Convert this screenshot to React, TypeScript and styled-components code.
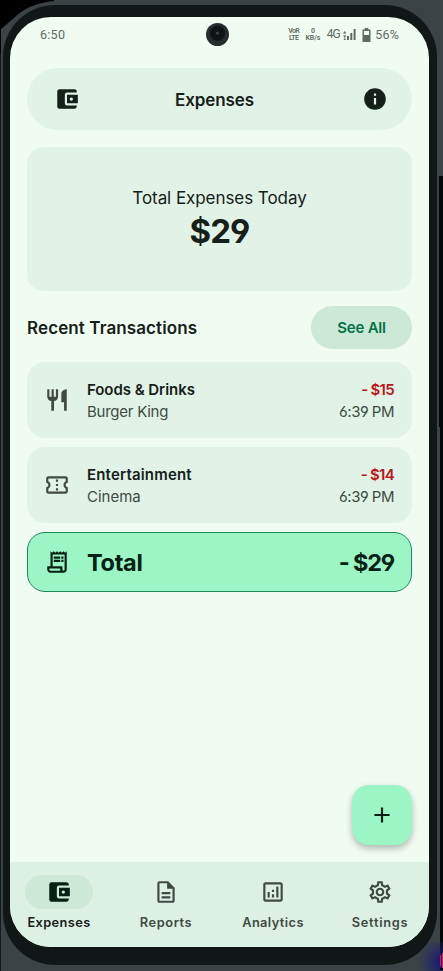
import React from "react";
import styled, { createGlobalStyle } from "styled-components";
import {
  MdAccountBalanceWallet,
  MdInfo,
  MdRestaurant,
  MdOutlineConfirmationNumber,
  MdOutlineReceiptLong,
  MdOutlineDescription,
  MdOutlineAnalytics,
  MdOutlineSettings,
  MdAdd,
} from "react-icons/md";

const Global = createGlobalStyle`
  * { box-sizing: border-box; }
  body { margin: 0; background: #000; overflow: hidden; font-family: Inter, sans-serif; font-feature-settings: "cv03", "cv04"; }
  button { font: inherit; border: 0; padding: 0; cursor: pointer; }
`;

const Stage = styled.div`
  position: relative;
  width: 443px;
  height: 971px;
  overflow: hidden;
  background: #3b4346;
`;

const Backdrop = styled.svg`
  position: absolute;
  inset: 0;
`;

const Phone = styled.main`
  position: relative;
  width: 434px;
  height: 960px;
  margin: 5px 0 0 3px;
  padding: 12px 8px 13px 7px;
  border-radius: 52px;
  background: #111616;
`;

const Screen = styled.div`
  position: relative;
  display: flex;
  flex-direction: column;
  width: 419px;
  height: 930px;
  overflow: hidden;
  border-radius: 41px;
  background: #f0fcf2;
  color: #16201a;
`;

const StatusBar = styled.div`
  display: flex;
  align-items: center;
  justify-content: space-between;
  height: 35px;
  padding: 0 30px;
  color: #606a63;
  font: 400 12.5px/15px Roboto, sans-serif;
`;

const Clock = styled.span`
  letter-spacing: 0.28px;
`;

const StatusItems = styled.div`
  display: flex;
  align-items: center;
`;

const TinyStack = styled.div<{ $gap: number; $spacing?: number }>`
  display: flex;
  flex-direction: column;
  align-items: center;
  margin-right: ${(p) => p.$gap}px;
  font-size: 7px;
  font-weight: 600;
  line-height: 6.9px;
  letter-spacing: ${(p) => p.$spacing ?? 0}px;
`;

const Network = styled.span`
  margin-right: 3px;
  font-size: 12px;
  letter-spacing: -1px;
`;

const Battery = styled.span`
  letter-spacing: 0.2px;
`;

const StatusSvg = styled.svg<{ $gap: number }>`
  margin-right: ${(p) => p.$gap}px;
`;

const Camera = styled.div`
  position: absolute;
  top: 6px;
  left: 196px;
  width: 23px;
  height: 23px;
  border-radius: 50%;
  background: radial-gradient(circle at 50% 44%, #3d4345 0 1px, #101415 2px 7px, #262c2f 8px);
`;

const Content = styled.div`
  display: flex;
  flex: 1;
  flex-direction: column;
  padding: 16px 17px 0;
`;

const Header = styled.header`
  display: grid;
  grid-template-columns: 26px 1fr 26px;
  align-items: center;
  height: 62px;
  padding: 0 24px 0 27px;
  border-radius: 31px;
  background: #e1f3e7;
`;

const Title = styled.h1`
  margin: 1px 10px 0 0;
  padding-right: 3px;
  font-size: 17px;
  font-weight: 600;
  line-height: 22px;
  letter-spacing: -0.12px;
  text-align: center;
`;

const Summary = styled.section`
  display: flex;
  flex-direction: column;
  align-items: center;
  height: 144px;
  margin-top: 17px;
  padding-top: 39px;
  border-radius: 17px;
  background: #e1f3e7;
`;

const SummaryLabel = styled.div`
  font-size: 17px;
  line-height: 24px;
  letter-spacing: -0.06px;
`;

const SummaryAmount = styled.div`
  font-size: 33px;
  font-weight: 700;
  line-height: 42px;
  letter-spacing: -0.9px;
`;

const SectionHead = styled.div`
  display: flex;
  align-items: center;
  justify-content: space-between;
  height: 43px;
  margin-top: 15px;
`;

const SectionTitle = styled.h2`
  margin: 0;
  font-size: 17px;
  font-weight: 600;
  letter-spacing: 0.11px;
`;

const SeeAll = styled.button`
  width: 101px;
  height: 43px;
  border-radius: 22px;
  background: #cce8d6;
  color: #087148;
  font-size: 15px;
  font-weight: 600;
  letter-spacing: -0.2px;
`;

const List = styled.div`
  display: flex;
  flex-direction: column;
  gap: 9px;
  margin-top: 12.6px;
`;

const Row = styled.article<{ $total?: boolean }>`
  display: grid;
  grid-template-columns: 43px 1fr auto;
  align-items: center;
  height: ${(p) => (p.$total ? 60 : 76.2)}px;
  padding: 0 ${(p) => (p.$total ? 17 : 18)}px 0 ${(p) => (p.$total ? 16 : 17)}px;
  border: ${(p) => (p.$total ? "1px solid #20875d" : "0")};
  border-radius: 18px;
  background: ${(p) => (p.$total ? "#9bf5c4" : "#e1f3e7")};
  color: ${(p) => (p.$total ? "#052113" : "#404a43")};
  svg { display: block; }
`;

const Cell = styled.div<{ $end?: boolean }>`
  display: flex;
  flex-direction: column;
  align-items: ${(p) => (p.$end ? "flex-end" : "flex-start")};
  padding-top: 2px;
  font-size: 15px;
  line-height: 22px;
`;

const Name = styled.div<{ $spacing: number }>`
  color: #16201a;
  font-weight: 600;
  letter-spacing: ${(p) => p.$spacing}px;
`;

const Amount = styled.div`
  color: #bd1518;
  font-weight: 600;
  letter-spacing: -0.7px;
`;

const Muted = styled.div<{ $spacing: number }>`
  letter-spacing: ${(p) => p.$spacing}px;
`;

const TotalText = styled.div<{ $spacing: number }>`
  padding-top: 2px;
  font-size: 23.5px;
  font-weight: 700;
  letter-spacing: ${(p) => p.$spacing}px;
`;

const Fab = styled.button`
  position: absolute;
  right: 17px;
  bottom: 102px;
  display: grid;
  place-items: center;
  width: 60px;
  height: 60px;
  border-radius: 17px;
  background: #9bf5c4;
  color: #052113;
  box-shadow: 0 4px 6px rgba(0, 0, 0, 0.2), 0 2px 8px rgba(0, 0, 0, 0.08);
`;

const Nav = styled.nav`
  display: grid;
  grid-template-columns: repeat(4, 98px);
  column-gap: 9px;
  height: 85px;
  padding-top: 13px;
  background: #ddf0e4;
`;

const NavItem = styled.a<{ $active?: boolean; $spacing: number }>`
  display: flex;
  flex-direction: column;
  align-items: center;
  color: ${(p) => (p.$active ? "#16201a" : "#404a43")};
  font-size: 12.8px;
  font-weight: 600;
  line-height: 17px;
  letter-spacing: ${(p) => p.$spacing}px;
`;

const NavPill = styled.span<{ $active?: boolean }>`
  display: grid;
  place-items: center;
  width: 68px;
  height: 34px;
  margin-bottom: 4.5px;
  border-radius: 17px;
  background: ${(p) => (p.$active ? "#cce8d6" : "transparent")};
  color: ${(p) => (p.$active ? "#052113" : "#404a43")};
`;

const transactions = [
  { icon: MdRestaurant, name: "Foods & Drinks", place: "Burger King", amount: "- $15", ns: -0.05, ps: -0.25 },
  { icon: MdOutlineConfirmationNumber, name: "Entertainment", place: "Cinema", amount: "- $14", ns: 0.18, ps: 0 },
];

const tabs = [
  { icon: MdAccountBalanceWallet, label: "Expenses", spacing: 0.4 },
  { icon: MdOutlineDescription, label: "Reports", spacing: 0.6 },
  { icon: MdOutlineAnalytics, label: "Analytics", spacing: 0.4 },
  { icon: MdOutlineSettings, label: "Settings", spacing: 0.75 },
];

export default function App() {
  return (
    <>
      <Global />
      <Stage>
        <Backdrop width="443" height="971" viewBox="0 0 443 971">
          <path d="M0 0H54V1C33 3 22 10 14 18L1 29V54H0Z" fill="#000" />
          <path d="M0 54H1V971H0Z" fill="#11191b" />
          <path d="M439 176H443V955H440V427H439Z" fill="#030707" />
          <defs>
            <radialGradient id="corner" cx="1" cy=".7" r="1">
              <stop offset="0" stopColor="#101078" />
              <stop offset="1" stopColor="#252e6b" stopOpacity="0" />
            </radialGradient>
          </defs>
          <path d="M416 942H443V971H416Z" fill="url(#corner)" />
          <path d="M440 955h1v11h-1zM442 953h1v15h-1z" fill="#e4145c" />
          <path d="M440 968h3v2h-3z" fill="#080808" />
        </Backdrop>
        <Phone>
          <Screen>
            <StatusBar>
              <Clock>6:50</Clock>
              <StatusItems>
                <TinyStack $gap={6.5} $spacing={-0.65}><span>VoR</span><span>LTE</span></TinyStack>
                <TinyStack $gap={6.5} $spacing={-0.1}><span>0</span><span>KB/s</span></TinyStack>
                <Network>4G</Network>
                <StatusSvg $gap={6} width="13" height="12" viewBox="0 0 13 12" fill="currentColor">
                  <path d="M0 4.5L1.7 2 3.4 4.5ZM0 6.5h3.4L1.7 9ZM.8 9.5h1.8V11H.8ZM4 7h2v4H4ZM7.3 4h2v7h-2ZM10.6 0h2v11h-2Z" />
                </StatusSvg>
                <StatusSvg $gap={4.5} width="9" height="14" viewBox="0 0 9 14" fill="currentColor">
                  <path fillRule="evenodd" d="M2.7 0h3.6v1.5H8.5V14H.5V1.5H2.7ZM2 3v4h5V3Z" />
                </StatusSvg>
                <Battery>56%</Battery>
              </StatusItems>
            </StatusBar>
            <Camera />
            <Content>
              <Header>
                <MdAccountBalanceWallet size={26} />
                <Title>Expenses</Title>
                <MdInfo size={26} />
              </Header>
              <Summary>
                <SummaryLabel>Total Expenses Today</SummaryLabel>
                <SummaryAmount>$29</SummaryAmount>
              </Summary>
              <SectionHead>
                <SectionTitle>Recent Transactions</SectionTitle>
                <SeeAll>See All</SeeAll>
              </SectionHead>
              <List>
                {transactions.map(({ icon: Icon, ...t }) => (
                  <Row key={t.name}>
                    <Icon size={26} />
                    <Cell>
                      <Name $spacing={t.ns}>{t.name}</Name>
                      <Muted $spacing={t.ps}>{t.place}</Muted>
                    </Cell>
                    <Cell $end>
                      <Amount>{t.amount}</Amount>
                      <Muted $spacing={-0.5}>6:39 PM</Muted>
                    </Cell>
                  </Row>
                ))}
                <Row $total>
                  <MdOutlineReceiptLong size={26} />
                  <TotalText $spacing={-0.3}>Total</TotalText>
                  <TotalText $spacing={-1.2}>- $29</TotalText>
                </Row>
              </List>
            </Content>
            <Fab aria-label="Add expense"><MdAdd size={26} /></Fab>
            <Nav>
              {tabs.map(({ icon: Icon, label, spacing }, i) => (
                <NavItem key={label} $active={i === 0} $spacing={spacing}>
                  <NavPill $active={i === 0}><Icon size={26} /></NavPill>
                  {label}
                </NavItem>
              ))}
            </Nav>
          </Screen>
        </Phone>
      </Stage>
    </>
  );
}
